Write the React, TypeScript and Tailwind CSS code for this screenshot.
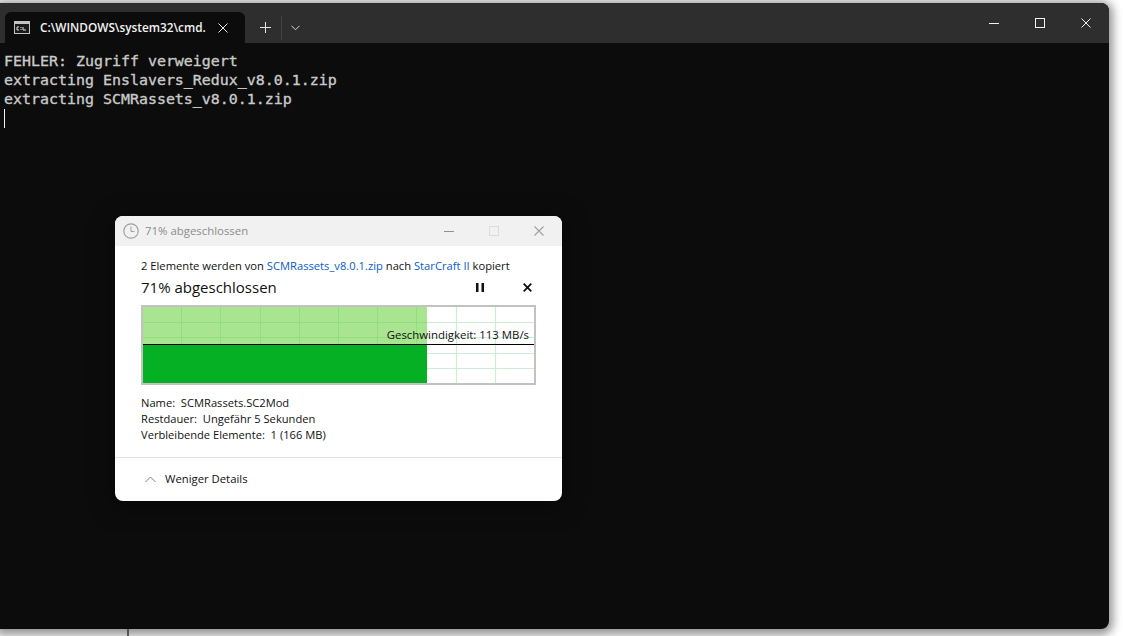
import React from 'react';

const ui = "font-['Open_Sans','Noto_Sans',sans-serif]";

const ProgressGraph: React.FC = () => {
  const vLines = [38, 77, 117, 156, 195, 234, 273, 313, 352];
  const hLines = [15, 30, 46, 61];
  return (
    <div className="relative h-[80px] w-[395px] border-2 border-[#c2c2c2] bg-white">
      <svg width="391" height="76" className="block">
        {vLines.map((x) => (
          <line key={x} x1={x + 0.5} y1="0" x2={x + 0.5} y2="76" stroke="#cdeed2" strokeWidth="1.2" />
        ))}
        {hLines.map((y) => (
          <line key={y} x1="0" y1={y + 0.5} x2="391" y2={y + 0.5} stroke="#cdeed2" strokeWidth="1.2" />
        ))}
        <rect x="0" y="0" width="284" height="37" fill="#a9e590" />
        {vLines.filter((x) => x < 284).map((x) => (
          <line key={x} x1={x + 0.5} y1="0" x2={x + 0.5} y2="37" stroke="#90de7c" />
        ))}
        {hLines.filter((y) => y < 37).map((y) => (
          <line key={y} x1="0" y1={y + 0.5} x2="284" y2={y + 0.5} stroke="#90de7c" />
        ))}
        <rect x="0" y="38" width="284" height="38" fill="#06b025" />
        <line x1="0" y1="37.5" x2="391" y2="37.5" stroke="#000" />
      </svg>
      <span className="absolute right-[5px] top-[20px] text-[11.4px] leading-[16px] text-[#111]">Geschwindigkeit: 113 MB/s</span>
    </div>
  );
};

const CopyDialog: React.FC = () => (
  <div className={`absolute left-[115px] top-[213px] h-[285px] w-[447px] overflow-hidden rounded-[8px] bg-white shadow-[0_4px_24px_rgba(0,0,0,0.5)] ${ui}`}>
    <div className="flex h-[30px] items-center bg-[#f1f1f1] pl-[8px]">
      <svg width="16" height="16" viewBox="0 0 16 16" fill="none" stroke="#a0a0a0">
        <circle cx="8" cy="8" r="7.2" strokeWidth="1.2" />
        <path d="M8 3.5V8.5H11.5" strokeWidth="1" />
      </svg>
      <span className="ml-[6px] text-[11.4px] text-[#8c8c8c]">71% abgeschlossen</span>
      <div className="ml-auto mr-[18px] flex items-center gap-[35px]">
        <span className="block h-px w-[10px] bg-[#909090]" />
        <span className="block h-[10px] w-[10px] border border-[#dcdcdc]" />
        <svg width="10" height="10" viewBox="0 0 10 10" stroke="#a0a0a0" strokeWidth="1.1">
          <path d="M0.5 0.5L9.5 9.5M9.5 0.5L0.5 9.5" />
        </svg>
      </div>
    </div>

    <div className="px-[26px] pt-[12px]">
      <div className="whitespace-nowrap text-[11.2px] leading-[16px] text-[#111]">
        2 Elemente werden von <span className="text-[#0a5ccc]">SCMRassets_v8.0.1.zip</span> nach{' '}
        <span className="text-[#0a5ccc]">StarCraft II</span> kopiert
      </div>
      <div className="mt-[2px] flex h-[22px] items-center">
        <span className="text-[15px] leading-[22px] text-[#111]">71% abgeschlossen</span>
        <svg width="8" height="9" viewBox="0 0 8 9" className="ml-auto" fill="#111">
          <rect x="0" y="0" width="2.5" height="9" />
          <rect x="5.5" y="0" width="2.5" height="9" />
        </svg>
        <svg width="9" height="9" viewBox="0 0 9 9" className="ml-[39px] mr-[4px]" stroke="#111" strokeWidth="1.8">
          <path d="M0.7 0.7L8.3 8.3M8.3 0.7L0.7 8.3" />
        </svg>
      </div>
      <div className="mt-[7px]">
        <ProgressGraph />
      </div>
      <div className="mt-[10px] text-[11.15px] leading-[16px] text-[#111]">
        <div>Name:&nbsp; SCMRassets.SC2Mod</div>
        <div>Restdauer:&nbsp; Ungefähr 5 Sekunden</div>
        <div>Verbleibende Elemente:&nbsp; 1 (166 MB)</div>
      </div>
    </div>

    <div className="mt-[14px] flex h-[44px] items-center border-t border-[#e4e4e4] pl-[30px]">
      <svg width="11" height="7" viewBox="0 0 11 7" fill="none" stroke="#808080" strokeWidth="1">
        <path d="M0.5 6L5.5 1L10.5 6" />
      </svg>
      <span className="ml-[9px] text-[11.3px] text-[#111]">Weniger Details</span>
    </div>
  </div>
);

const App: React.FC = () => {
  return (
    <div className="relative h-[636px] w-[1123px] overflow-hidden bg-white pt-[3px]">
      <div className="relative h-[626px] w-[1109px] rounded-tr-[8px] rounded-br-[8px] bg-[#0c0c0c] shadow-[0_2px_10px_4px_rgba(0,0,0,0.42)]">
        <div className="flex h-[40px] items-end rounded-tr-[8px] bg-[#2e2e2e] pl-[5px]">
          <div className={`flex h-[31px] w-[240px] items-center rounded-t-[6px] bg-[#0c0c0c] pl-[9px] ${ui}`}>
            <svg width="16" height="13" viewBox="0 0 16 13" className="shrink-0">
              <rect x="0.5" y="0.5" width="15" height="12" fill="#1a1a1a" stroke="#c4c4c4" />
              <rect x="1" y="1" width="14" height="2" fill="#c4c4c4" />
              <path d="M3 6H5M3 6V9H5M7 6V7M7 9V8M9 6V9H12" stroke="#e0e0e0" fill="none" />
            </svg>
            <span className="ml-[10px] w-[165px] whitespace-nowrap text-[11.8px] font-semibold text-[#f2f2f2]">C:\WINDOWS\system32\cmd.</span>
            <svg width="10" height="10" viewBox="0 0 10 10" stroke="#e6e6e6" strokeWidth="1" className="ml-[13px]">
              <path d="M0.5 0.5L9.5 9.5M9.5 0.5L0.5 9.5" />
            </svg>
          </div>
          <div className="flex h-[31px] items-center">
            <svg width="11" height="11" viewBox="0 0 11 11" stroke="#e6e6e6" strokeWidth="1" className="ml-[15px]">
              <path d="M5.5 0V11M0 5.5H11" />
            </svg>
            <span className="ml-[10px] block h-[24px] w-px bg-[#444]" />
            <svg width="9" height="6" viewBox="0 0 9 6" fill="none" stroke="#d8d8d8" strokeWidth="1" className="ml-[9px]">
              <path d="M0.5 0.8L4.5 4.8L8.5 0.8" />
            </svg>
          </div>
          <div className="ml-auto mr-[18px] flex h-[40px] items-center gap-[36px]">
            <span className="block h-px w-[10px] bg-[#f0f0f0]" />
            <span className="block h-[10px] w-[10px] border border-[#f0f0f0]" />
            <svg width="10" height="10" viewBox="0 0 10 10" stroke="#f0f0f0" strokeWidth="1">
              <path d="M0.5 0.5L9.5 9.5M9.5 0.5L0.5 9.5" />
            </svg>
          </div>
        </div>

        <div className="pl-[4px] pt-[9px] font-['DejaVu_Sans_Mono',monospace] text-[14.95px] leading-[19px] text-[#cccccc] [-webkit-text-stroke:0.35px_#c4c4c4]">
          <div>FEHLER: Zugriff verweigert</div>
          <div>extracting Enslavers_Redux_v8.0.1.zip</div>
          <div>extracting SCMRassets_v8.0.1.zip</div>
          <div className="h-[19px] w-px bg-[#f0f0f0]" />
        </div>

        <CopyDialog />
      </div>
      <span className="absolute bottom-0 left-[127px] block h-[7px] w-[2px] bg-[#555]" />
    </div>
  );
};

export default App;
